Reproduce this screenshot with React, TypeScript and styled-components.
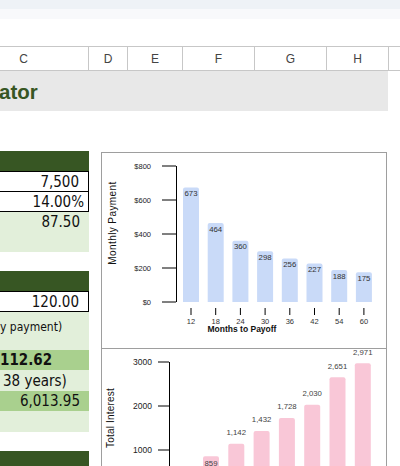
import React from 'react';
import styled, { createGlobalStyle } from 'styled-components';

const GlobalStyle = createGlobalStyle`
  html, body {
    margin: 0;
    padding: 0;
    background: #fff;
    overflow: hidden;
  }
  body {
    font-family: "Liberation Sans", Arial, sans-serif;
  }
`;

const DARK_GREEN = '#375623';
const LIGHT_GREEN = '#e2efda';
const MID_GREEN = '#a9d08e';
const GRID = '#c7c7c7';

const Sheet = styled.div`
  width: 400px;
  height: 466px;
  overflow: hidden;
  display: flex;
  flex-direction: column;
`;

const Strip = styled.div<{ $h: number; $bg: string }>`
  flex-shrink: 0;
  height: ${(p) => p.$h}px;
  background: ${(p) => p.$bg};
`;

const HeaderRow = styled.div`
  flex-shrink: 0;
  display: flex;
  height: 25px;
  margin-left: -41px;
  box-sizing: border-box;
  border-top: 1px solid ${GRID};
  border-bottom: 1px solid ${GRID};
`;

const HeaderCell = styled.div<{ $w: number }>`
  flex-shrink: 0;
  width: ${(p) => p.$w}px;
  box-sizing: border-box;
  border-right: 1px solid ${GRID};
  display: flex;
  align-items: center;
  justify-content: center;
  font-size: 12px;
  color: #444;
`;

const TitleBand = styled.div`
  flex-shrink: 0;
  width: 388px;
  height: 40px;
  background: #e8e8e8;
  display: flex;
  align-items: center;
  padding-top: 2px;
  box-sizing: border-box;
`;

const Title = styled.h1`
  margin: 0 0 0 -1px;
  font-size: 20.5px;
  line-height: 20px;
  font-weight: bold;
  color: ${DARK_GREEN};
`;

const Body = styled.div`
  display: flex;
  align-items: flex-start;
`;

const CellColumn = styled.div`
  flex-shrink: 0;
  width: 89px;
  display: flex;
  flex-direction: column;
  font-family: "DejaVu Sans Condensed", "DejaVu Sans", sans-serif;
  font-stretch: condensed;
  color: #111;
`;

const Cell = styled.div<{
  $h: number;
  $bg?: string;
  $right?: boolean;
  $pad?: number;
  $size?: number;
  $bold?: boolean;
}>`
  height: ${(p) => p.$h}px;
  background: ${(p) => p.$bg || 'transparent'};
  display: flex;
  align-items: center;
  justify-content: ${(p) => (p.$right ? 'flex-end' : 'flex-start')};
  padding: ${(p) => (p.$right ? `0 ${p.$pad ?? 9}px 0 0` : `0 0 0 ${p.$pad ?? 0}px`)};
  font-size: ${(p) => p.$size ?? 15}px;
  font-weight: ${(p) => (p.$bold ? 'bold' : 'normal')};
  white-space: nowrap;
  overflow: hidden;
`;

const InputGroup = styled.div`
  border: 1px solid #000;
  border-left: none;
  background: #fff;
`;

const InputRow = styled(Cell)`
  & + & {
    border-top: 1px solid #000;
  }
`;

const ChartColumn = styled.div`
  display: flex;
  flex-direction: column;
  margin-left: 12px;
  padding-top: 41px;
`;

const ChartFrame = styled.div<{ $h: number; $overlap?: boolean }>`
  width: 286px;
  height: ${(p) => p.$h}px;
  box-sizing: border-box;
  border: 1px solid #9e9e9e;
  background: #fff;
  margin-top: ${(p) => (p.$overlap ? -1 : 0)}px;
  overflow: hidden;

  svg {
    display: block;
    font-family: "Liberation Sans", Arial, sans-serif;
  }
`;

const columns = [
  { label: 'C', w: 130 },
  { label: 'D', w: 39 },
  { label: 'E', w: 55 },
  { label: 'F', w: 72 },
  { label: 'G', w: 72 },
  { label: 'H', w: 62 },
  { label: '', w: 80 },
];

const payments = [
  { months: 12, value: 673 },
  { months: 18, value: 464 },
  { months: 24, value: 360 },
  { months: 30, value: 298 },
  { months: 36, value: 256 },
  { months: 42, value: 227 },
  { months: 54, value: 188 },
  { months: 60, value: 175 },
];

const interest = [859, 1142, 1432, 1728, 2030, 2651, 2971];

// bar with only the top corners rounded
const barPath = (x: number, y: number, w: number, h: number, r = 2) =>
  `M${x},${y + h} L${x},${y + r} Q${x},${y} ${x + r},${y} L${x + w - r},${y} Q${x + w},${y} ${x + w},${y + r} L${x + w},${y + h} Z`;

const PaymentChart = () => {
  const base = 149;
  const scale = 0.17;
  return (
    <svg width={284} height={195}>
      <text
        transform="translate(14 70) rotate(-90)"
        textAnchor="middle"
        fontSize={10}
        letterSpacing={0.4}
        fill="#111"
      >
        Monthly Payment
      </text>
      {[800, 600, 400, 200, 0].map((v, i) => {
        const y = 13 + i * 34;
        return (
          <g key={v}>
            <line x1={60} x2={74} y1={y} y2={y} stroke="#000" strokeWidth={1} />
            <text x={49} y={y + 2.7} textAnchor="end" fontSize={7.5} fill="#222">
              ${v}
            </text>
          </g>
        );
      })}
      <line x1={74.5} x2={74.5} y1={13} y2={base} stroke="#000" strokeWidth={1} />
      {payments.map((p, i) => {
        const x = 81 + i * 24.7;
        const h = p.value * scale;
        const cx = x + 8;
        return (
          <g key={p.months}>
            <path d={barPath(x, base - h, 16, h)} fill="#c9daf8" />
            <text x={cx} y={base - h + 8.5} textAnchor="middle" fontSize={7.8} fill="#333">
              {p.value}
            </text>
            <line x1={cx} x2={cx} y1={155} y2={162} stroke="#000" strokeWidth={1} />
            <text x={cx} y={171} textAnchor="middle" fontSize={7.5} fill="#333">
              {p.months}
            </text>
          </g>
        );
      })}
      <text x={140} y={178.5} textAnchor="middle" fontSize={8.5} fontWeight="bold" fill="#111">
        Months to Payoff
      </text>
    </svg>
  );
};

const InterestChart = () => {
  const base = 145;
  const scale = 0.044;
  return (
    <svg width={284} height={160}>
      <text
        transform="translate(12 69) rotate(-90)"
        textAnchor="middle"
        fontSize={10}
        letterSpacing={0.2}
        fill="#111"
      >
        Total Interest
      </text>
      {[3000, 2000, 1000].map((v, i) => {
        const y = 13 + i * 44;
        return (
          <g key={v}>
            <line x1={56} x2={67} y1={y} y2={y} stroke="#000" strokeWidth={1} />
            <text x={50} y={y + 3} textAnchor="end" fontSize={8.5} fill="#222">
              {v}
            </text>
          </g>
        );
      })}
      <line x1={67.5} x2={67.5} y1={13} y2={160} stroke="#000" strokeWidth={1} />
      {interest.map((v, i) => {
        const x = 101 + i * 25.3;
        const h = v * scale;
        const top = base - h;
        const labelY = i === 0 ? top + 10 : top - 8.5;
        return (
          <g key={v}>
            <path d={barPath(x, top, 16, h)} fill="#f9c7d7" />
            <text x={x + 8} y={labelY} textAnchor="middle" fontSize={7.8} fill="#444">
              {v.toLocaleString('en-US')}
            </text>
          </g>
        );
      })}
    </svg>
  );
};

const App = () => {
  return (
    <Sheet>
      <GlobalStyle />
      <Strip $h={9} $bg="#eef2f6" />
      <Strip $h={10} $bg="#f8f9fb" />
      <Strip $h={27} $bg="#fff" />
      <HeaderRow>
        {columns.map((c, i) => (
          <HeaderCell key={i} $w={c.w}>
            {c.label}
          </HeaderCell>
        ))}
      </HeaderRow>
      <TitleBand>
        <Title>ator</Title>
      </TitleBand>
      <Body>
        <CellColumn>
          <Cell $h={40} />
          <Cell $h={20} $bg={DARK_GREEN} />
          <InputGroup>
            <InputRow $h={19} $right>
              7,500
            </InputRow>
            <InputRow $h={19} $right $pad={4}>
              14.00%
            </InputRow>
          </InputGroup>
          <Cell $h={20} $bg={LIGHT_GREEN} $right>
            87.50
          </Cell>
          <Cell $h={20} $bg={LIGHT_GREEN} />
          <Cell $h={19} />
          <Cell $h={20} $bg={DARK_GREEN} />
          <InputGroup>
            <InputRow $h={19} $right>
              120.00
            </InputRow>
          </InputGroup>
          <Cell $h={30} $bg={LIGHT_GREEN} $size={12}>
            y payment)
          </Cell>
          <Cell $h={8} $bg={LIGHT_GREEN} />
          <Cell $h={20} $bg={MID_GREEN} $bold $pad={-1}>
            112.62
          </Cell>
          <Cell $h={21} $bg={LIGHT_GREEN} $pad={3}>
            38 years)
          </Cell>
          <Cell $h={20} $bg={MID_GREEN} $right>
            6,013.95
          </Cell>
          <Cell $h={21} $bg={LIGHT_GREEN} />
          <Cell $h={19} />
          <Cell $h={20} $bg={DARK_GREEN} />
        </CellColumn>
        <ChartColumn>
          <ChartFrame $h={197}>
            <PaymentChart />
          </ChartFrame>
          <ChartFrame $h={160} $overlap>
            <InterestChart />
          </ChartFrame>
        </ChartColumn>
      </Body>
    </Sheet>
  );
};

export default App;
